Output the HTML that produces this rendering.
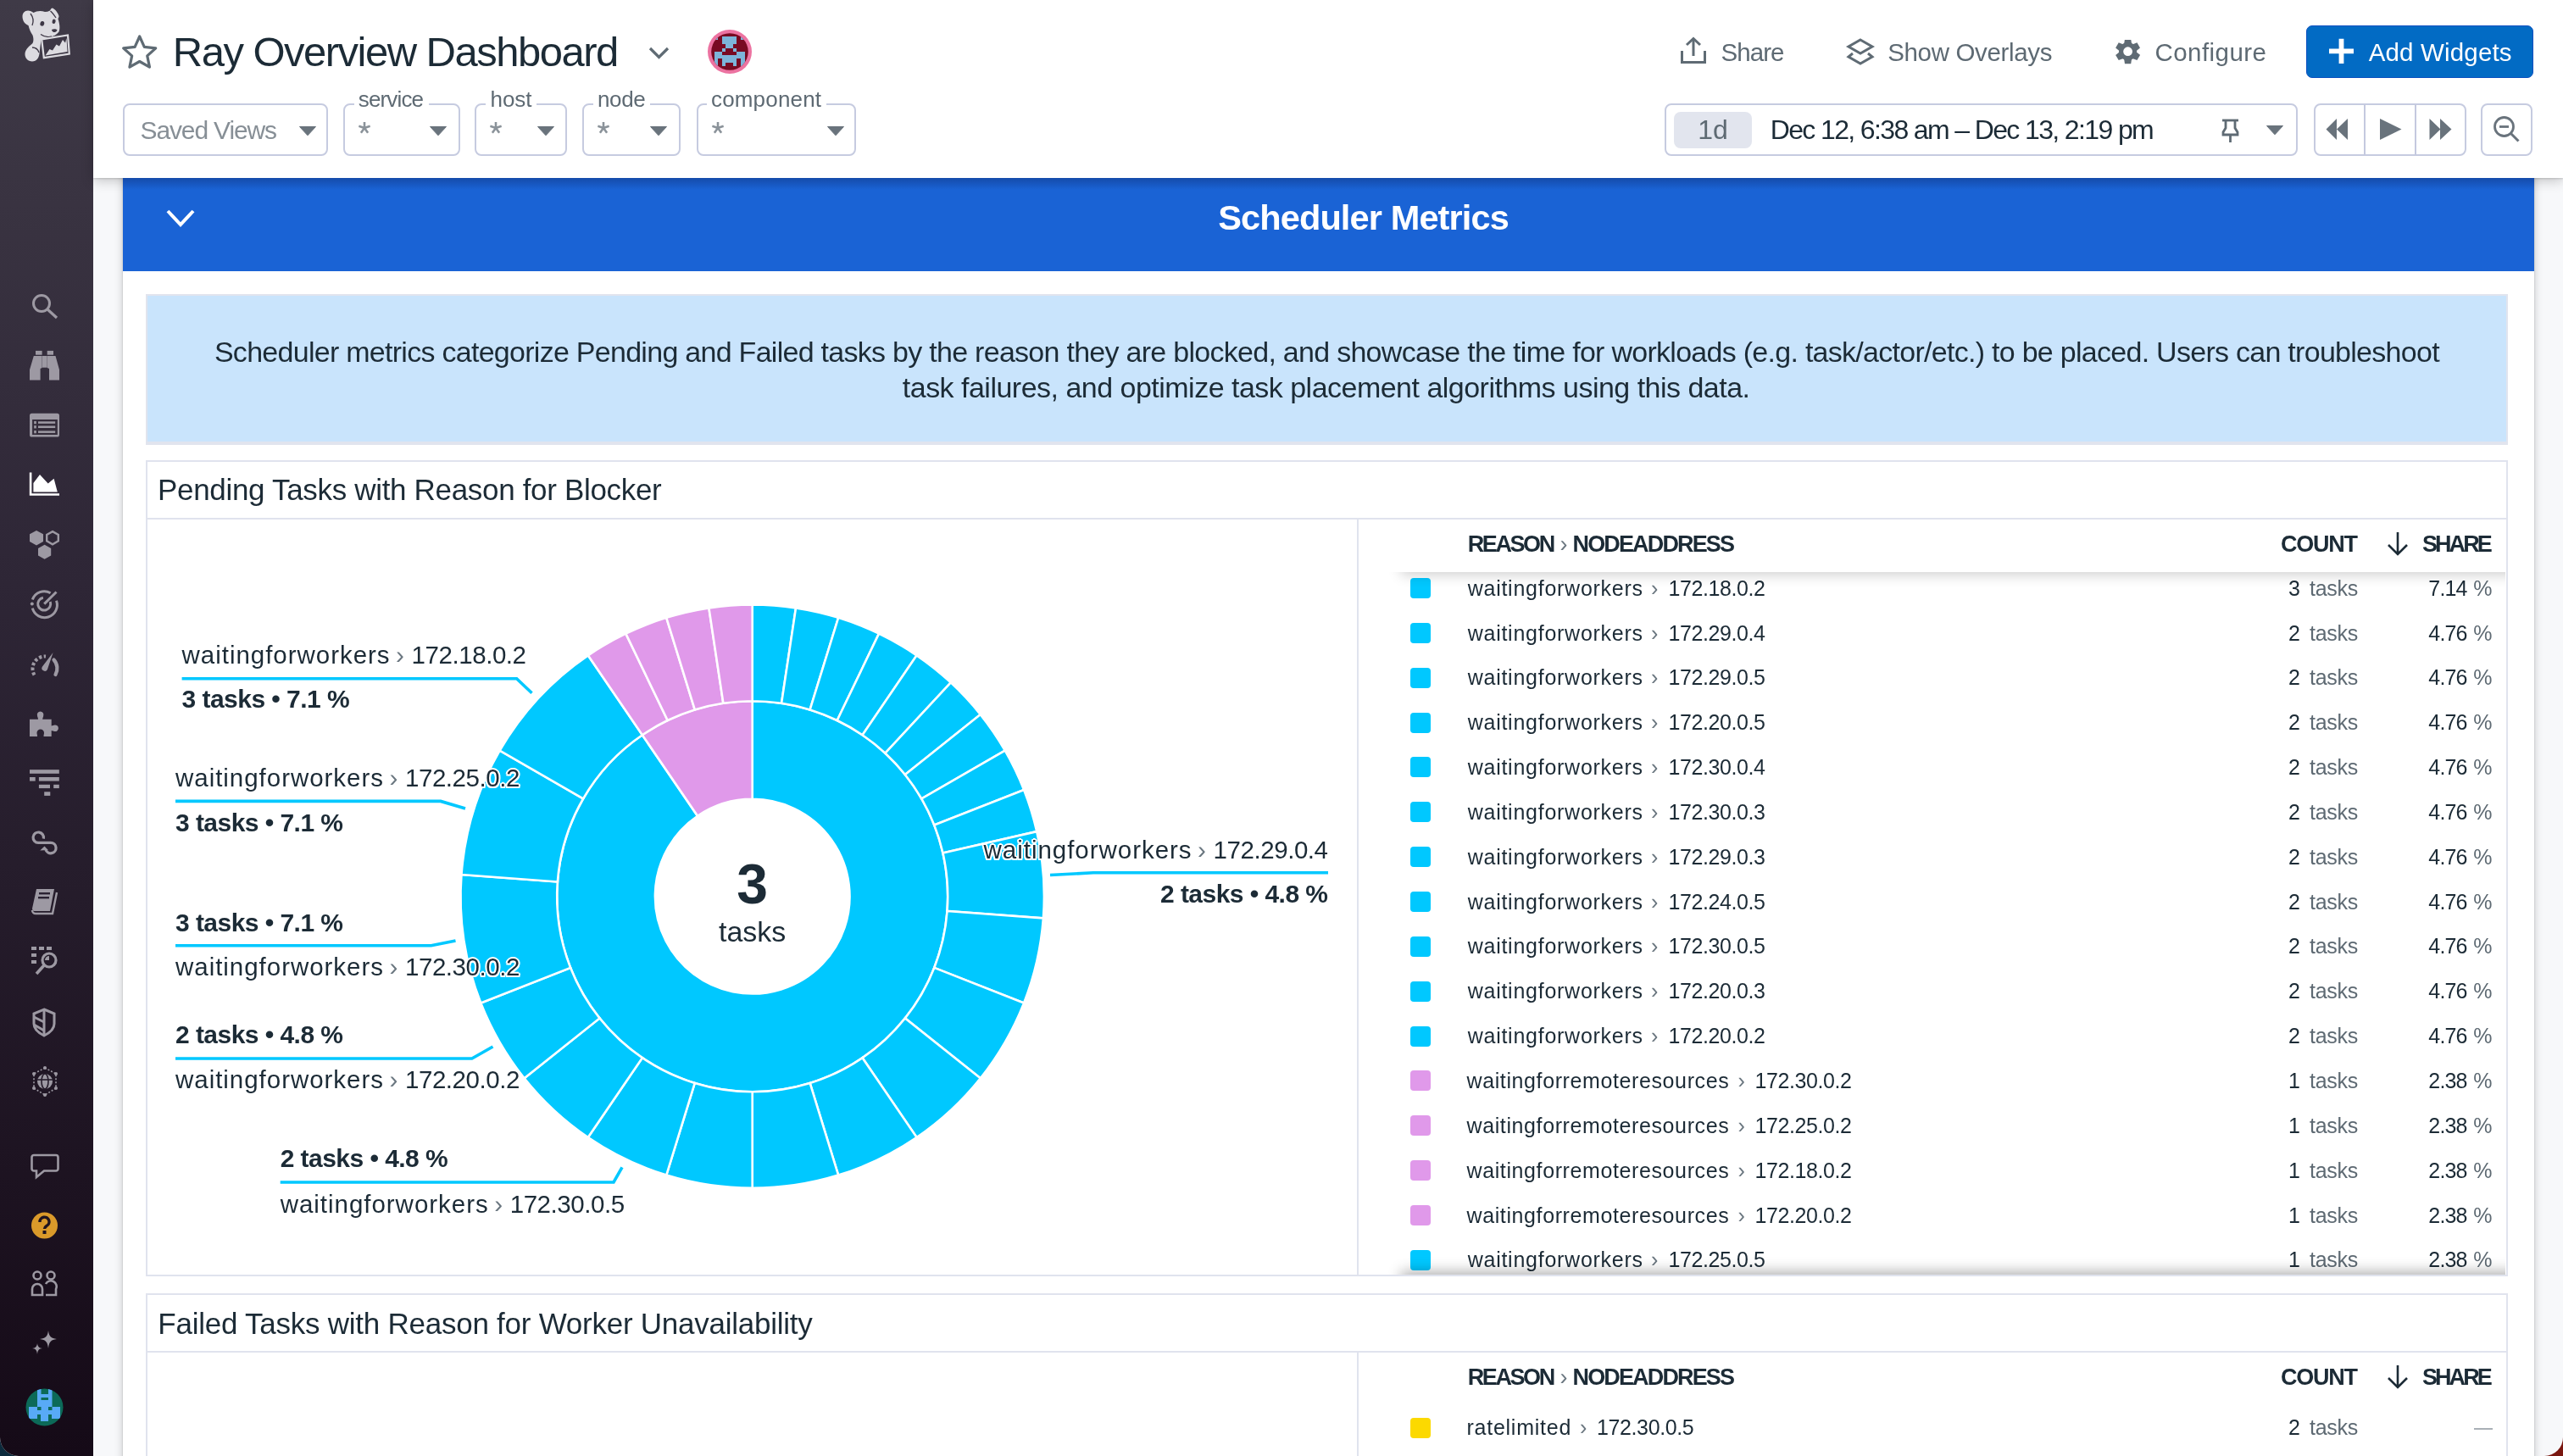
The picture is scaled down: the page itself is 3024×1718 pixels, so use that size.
<!DOCTYPE html><html><head><meta charset="utf-8"><style>
html,body{margin:0;padding:0;width:3024px;height:1718px;overflow:hidden;background:#f7f8fa;font-family:"Liberation Sans",sans-serif;}
.a{position:absolute;}
.t{position:absolute;white-space:nowrap;line-height:1;}
.halo{text-shadow:0 0 1px #fff,2px 0 0 #fff,-2px 0 0 #fff,0 2px 0 #fff,0 -2px 0 #fff,1.5px 1.5px 0 #fff,-1.5px -1.5px 0 #fff,1.5px -1.5px 0 #fff,-1.5px 1.5px 0 #fff;}
.box{position:absolute;box-sizing:border-box;border:2px solid #c6cbe0;border-radius:8px;background:#fff;}
.flab{position:absolute;background:#fff;height:20px;}
</style></head><body>
<div class="a" style="left:0;top:1680px;width:40px;height:38px;background:#0b2a3c"></div>
<div class="a" style="left:2984px;top:1680px;width:40px;height:38px;background:#7a1710"></div>
<div class="a" style="left:0;top:0;width:3024px;height:1718px;border-radius:0 0 22px 22px;overflow:hidden;background:#f7f8fa">
<div class="a" style="left:0;top:0;width:110px;height:1718px;background:linear-gradient(#3f3a47,#2e2636 40%,#150a17)"></div>
<svg class="a" style="left:0px;top:0px" width="110" height="90" viewBox="0 0 110 90">
<g fill="#dcdbe0">
<path d="M33 12.5 C29 12.5 26.5 15.5 26.5 19.5 C26.5 24 29 28.5 33.5 30 C34.5 34 36 38 38.5 41.5 C39.5 44.5 40 48 38.5 51 C35 54 30 58 29.5 63 C29 68.5 33 72.5 38 72.5 C43 72.5 46 68.5 46.5 63 L48.5 47 C51 46.5 55 45.5 58 44 C63 43 67 41 69.5 37.5 C71 34 70.5 28 68.5 22.5 C68.5 21.5 69.5 20.5 69.5 19 C68.5 15 65 11 62 9.5 C60.5 9.5 60 10.5 59 12.5 C57 13.5 55 14 53 14 C48 12 43 13 39.5 15 C37.5 13.5 35.5 12.5 33 12.5 Z"/>
</g>
<g fill="none" stroke="#3d3745" stroke-width="1.3">
<path d="M36 16 C39 20 40 25 38 30"/>
<path d="M59.5 13 C62 15 64 18 66 21"/>
<path d="M48 40.5 C52 43.5 57 44 61 43"/>
<path d="M38 56 C42 56 45 59 46 62"/>
</g>
<g fill="#3d3745">
<ellipse cx="49.8" cy="27.8" rx="2.4" ry="2.9" transform="rotate(15 49.8 27.8)"/>
<ellipse cx="63.6" cy="25.3" rx="2" ry="2.7" transform="rotate(15 63.6 25.3)"/>
<path d="M61 35 C63 34 66.5 34.2 67.5 35.5 C66.5 38 64 38.5 62.8 37.8 C61.8 37 61 36 61 35 Z"/>
</g>
<path d="M49.2 46.3 L80 41.5 L81.8 63.5 L51.8 68.2 Z" fill="#3d3745" stroke="#dcdbe0" stroke-width="2.2"/>
<path d="M53.5 65.5 L58.5 58 L62 59.5 L66.5 52.5 L70 54.5 L74 47 L77 50.5 L78.5 45 L79.5 61 Z" fill="#dcdbe0"/>
</svg>
<svg class="a" style="left:34px;top:344px" width="38" height="36" viewBox="0 0 38 36"><circle cx="15" cy="14" r="9.5" fill="none" stroke="#9d99a3" stroke-width="3"/><path d="M22 21 L33 31" stroke="#9d99a3" stroke-width="3.2"/></svg>
<svg class="a" style="left:34px;top:412px" width="38" height="40" viewBox="0 0 38 40"><g fill="#9d99a3"><rect x="8" y="1.9" width="7.6" height="4.8"/><rect x="21.7" y="1.9" width="7.3" height="4.8"/><rect x="15.8" y="8" width="5.8" height="13.7"/><path d="M5.8 8 H15.6 V22 L13.6 23 V36.6 H1 V24.3 Z"/><path d="M21.7 8 H31.5 L36 24.3 V36.6 H24 V23 L21.7 22 Z"/></g></svg>
<svg class="a" style="left:34px;top:484px" width="38" height="34" viewBox="0 0 38 34"><rect x="1" y="3.8" width="35" height="27.8" rx="2.6" fill="#9d99a3"/><rect x="4.1" y="11" width="29.7" height="18" fill="#342c3a"/><g fill="#9d99a3"><rect x="6.2" y="12.9" width="2.6" height="3.3"/><rect x="6.2" y="18.1" width="2.6" height="3.3"/><rect x="6.2" y="24" width="2.6" height="3.3"/><rect x="11" y="13.3" width="20.2" height="2.5"/><rect x="11" y="18.5" width="20.2" height="2.5"/><rect x="11" y="24.4" width="20.2" height="2.5"/></g></svg>
<svg class="a" style="left:34px;top:554px" width="38" height="34" viewBox="0 0 38 34"><path d="M2.1 3.5 V29.5 H36" fill="none" stroke="#fff" stroke-width="2.6"/><path d="M5.4 26.4 V16 L13 6.1 L22.7 16.6 L29.6 10.7 L33.8 26.4 Z" fill="#fff"/></svg>
<svg class="a" style="left:34px;top:624px" width="38" height="38" viewBox="0 0 38 38"><g fill="#9d99a3"><polygon points="9,1.9 17,6.3 17,15.1 9,19.5 1,15.1 1,6.3"/><polygon points="18.6,18.8 26.2,23 26.2,31.6 18.6,35.8 11,31.6 11,23"/></g><polygon points="28,3.1 34.8,7 34.8,14.4 28,18.3 21.2,14.4 21.2,7" fill="none" stroke="#9d99a3" stroke-width="2.4"/></svg>
<svg class="a" style="left:34px;top:694px" width="38" height="38" viewBox="0 0 38 38"><g fill="none" stroke="#9d99a3" stroke-width="3"><path d="M4.3 13.5 A14.8 14.8 0 0 1 25.6 5.8"/><path d="M32.5 14.8 A14.8 14.8 0 1 1 4.3 23.7"/><path d="M25.25 16 A7.5 7.5 0 1 1 16.9 11.2"/><path d="M18.2 18.6 L32.5 4.5"/></g><circle cx="3.8" cy="18.6" r="2" fill="#9d99a3"/></svg>
<svg class="a" style="left:34px;top:766px" width="38" height="36" viewBox="0 0 38 36"><path d="M6.5 30.5 A14.5 14.5 0 0 1 20 8.6" fill="none" stroke="#9d99a3" stroke-width="4" stroke-dasharray="3.4 2.4"/><path d="M29.5 12.5 A15 15 0 0 1 31.5 30" fill="none" stroke="#9d99a3" stroke-width="4.2" stroke-linecap="round"/><path d="M28.6 4 L21.9 23.9 A3.4 3.4 0 1 1 15.8 20.7 Z" fill="#9d99a3"/></svg>
<svg class="a" style="left:34px;top:836px" width="38" height="36" viewBox="0 0 38 36"><g fill="#9d99a3"><path d="M1 12.8 H11 C11 11 10 10 10 8.5 A3.8 3.8 0 1 1 17.2 8.5 C17.2 10 16.2 11 16.2 12.8 H26.7 V20.5 C28 20.5 29 19.5 30.5 19.5 A3.8 3.8 0 1 1 30.5 27 C29 27 28 26 26.7 26 V32.9 H17.5 C17.5 31 18 30 18 28.8 A4.2 4.2 0 1 0 9.5 28.8 C9.5 30 10 31 10 32.9 H1 Z"/></g></svg>
<svg class="a" style="left:34px;top:906px" width="38" height="36" viewBox="0 0 38 36"><g fill="#9d99a3"><rect x="1" y="2.2" width="34.8" height="4.6"/><rect x="1" y="11" width="6.7" height="4.6"/><rect x="11.9" y="11" width="23.9" height="4.6"/><rect x="11.9" y="19.8" width="13.1" height="4.3"/><rect x="29.2" y="19.8" width="6.6" height="4.3"/><rect x="18.2" y="28.3" width="7.1" height="4.6"/></g></svg>
<svg class="a" style="left:34px;top:976px" width="38" height="38" viewBox="0 0 38 38"><path d="M17.3 13.6 A6.2 6.2 0 1 0 11.1 18.4 H25.9 A6.2 6.2 0 1 1 19.9 26.3" fill="none" stroke="#9d99a3" stroke-width="3.2"/><path d="M13.2 27.5 L18.5 22.5 L22.8 27 Z" fill="#9d99a3"/></svg>
<svg class="a" style="left:34px;top:1046px" width="38" height="36" viewBox="0 0 38 36"><path d="M9 3 H30 L25 29 H6 A3 3 0 0 1 4 26 Z" fill="#9d99a3"/><path d="M33 7 L28 32 H8 A4 4 0 0 1 4 28" fill="none" stroke="#9d99a3" stroke-width="2.4"/><g fill="#2a2232"><rect x="12" y="7" width="13" height="2.4"/><rect x="11" y="12" width="13" height="2.4"/></g></svg>
<svg class="a" style="left:34px;top:1114px" width="38" height="40" viewBox="0 0 38 40"><g fill="#9d99a3"><rect x="3" y="3" width="6" height="4"/><rect x="12" y="3" width="6" height="4"/><rect x="21" y="3" width="6" height="4"/><rect x="3" y="11" width="6" height="4"/><rect x="3" y="19" width="6" height="4"/></g><circle cx="24" cy="19" r="8" fill="none" stroke="#9d99a3" stroke-width="3.2"/><path d="M18 25 L9 35" stroke="#9d99a3" stroke-width="3.6"/><path d="M19 19 A5 5 0 0 1 24 14 V19 Z" fill="#9d99a3"/></svg>
<svg class="a" style="left:34px;top:1188px" width="38" height="36" viewBox="0 0 38 36"><path d="M18 3 L30 8 V20 C30 27 24 31 18 34 C12 31 6 27 6 20 V8 Z" fill="none" stroke="#9d99a3" stroke-width="3"/><path d="M18 3 V34" stroke="#9d99a3" stroke-width="3"/><path d="M6 12 L18 18 M6 21 L18 28" stroke="#9d99a3" stroke-width="3"/></svg>
<svg class="a" style="left:34px;top:1257px" width="38" height="38" viewBox="0 0 38 38"><path d="M19 3 L32 10 L32 27 L19 35 L6 27 L6 10 Z" fill="none" stroke="#9d99a3" stroke-width="1.6" stroke-dasharray="2 2"/><circle cx="19" cy="19" r="9" fill="#9d99a3"/><g fill="none" stroke="#261d2c" stroke-width="1.6"><ellipse cx="19" cy="19" rx="4" ry="9"/><path d="M10 17 H28"/></g><g fill="#9d99a3"><circle cx="19" cy="3" r="2"/><circle cx="32" cy="10" r="2"/><circle cx="32" cy="27" r="2"/><circle cx="19" cy="35" r="2"/><circle cx="6" cy="27" r="2"/><circle cx="6" cy="10" r="2"/></g></svg>
<svg class="a" style="left:34px;top:1358px" width="38" height="36" viewBox="0 0 38 36"><path d="M6 5 H32 A2.5 2.5 0 0 1 34.5 7.5 V21 A2.5 2.5 0 0 1 32 23.5 H18 L9 31 V23.5 H6 A2.5 2.5 0 0 1 3.5 21 V7.5 A2.5 2.5 0 0 1 6 5 Z" fill="none" stroke="#9d99a3" stroke-width="2.6"/></svg>
<svg class="a" style="left:34px;top:1427px" width="38" height="38" viewBox="0 0 38 38"><circle cx="18.5" cy="19" r="15.5" fill="#da9a2a"/><path d="M13 15 A5.5 5.5 0 1 1 21 19.5 C19.5 20.5 18.5 21 18.5 23" fill="none" stroke="#1e1420" stroke-width="3.4"/><rect x="16.5" y="25" width="4" height="4" fill="#1e1420"/></svg>
<svg class="a" style="left:34px;top:1497px" width="38" height="36" viewBox="0 0 38 36"><g fill="none" stroke="#9d99a3" stroke-width="2.6"><circle cx="10" cy="8" r="4.5"/><circle cx="26" cy="8" r="4.5"/><path d="M4 31 V24 A6 6 0 0 1 10 18 A6 6 0 0 1 16 24 V31 Z"/><path d="M20 18 A6 6 0 0 1 32 24 V31 H20"/></g></svg>
<svg class="a" style="left:34px;top:1568px" width="38" height="36" viewBox="0 0 38 36"><g fill="#9d99a3"><path d="M23 2 C24 9 26 11 33 12 C26 13 24 15 23 23 C22 15 20 13 13 12 C20 11 22 9 23 2 Z"/><path d="M10 17 C10.5 21 12 22.5 16 23 C12 23.5 10.5 25 10 30 C9.5 25 8 23.5 4 23 C8 22.5 9.5 21 10 17 Z"/></g></svg>
<svg class="a" style="left:30px;top:1638px" width="46" height="46" viewBox="0 0 46 46"><defs><clipPath id="cav"><circle cx="22.5" cy="22.5" r="22"/></clipPath></defs><circle cx="22.5" cy="22.5" r="22" fill="#0c6a58"/><g clip-path="url(#cav)" fill="#58aaf6"><rect x="14" y="0" width="4.5" height="28"/><rect x="27" y="0" width="4.5" height="28"/><rect x="18" y="7" width="9" height="4"/><rect x="18" y="14" width="9" height="4"/><rect x="4" y="22" width="37" height="9"/><rect x="18" y="18" width="9" height="21"/><rect x="4" y="31" width="10" height="5"/><rect x="31" y="31" width="10" height="5"/></g><g clip-path="url(#cav)" fill="#0c6a58"><rect x="14" y="22" width="4.5" height="4"/><rect x="27" y="22" width="4.5" height="4"/></g></svg>
<div class="a" style="left:145px;top:200px;width:2845px;height:1600px;background:#fff;box-shadow:0 0 2px rgba(0,0,0,.18),0 0 10px rgba(0,0,0,.2)"></div>
<div class="a" style="left:110px;top:0;width:2914px;height:210px;background:#fff;box-shadow:0 1px 2px rgba(0,0,0,.15),0 3px 14px rgba(0,0,0,.22)"></div>
<svg class="a" style="left:140px;top:36px" width="50" height="50" viewBox="0 0 50 50"><polygon points="24.70,7.00 30.28,19.31 43.72,20.82 33.74,29.94 36.46,43.18 24.70,36.50 12.94,43.18 15.66,29.94 5.68,20.82 19.12,19.31" fill="none" stroke="#5f6b74" stroke-width="3.2" stroke-linejoin="round"/></svg>
<svg class="a" style="left:760px;top:50px" width="36" height="26" viewBox="0 0 36 26"><polyline points="7,7 17.5,17.5 28,7" fill="none" stroke="#5f6b74" stroke-width="3.2"/></svg>
<svg class="a" style="left:835px;top:35px" width="52" height="52" viewBox="0 0 52 52"><defs><clipPath id="cav2"><circle cx="26" cy="26" r="21.8"/></clipPath></defs><circle cx="26" cy="26" r="26" fill="#ec73a1"/><circle cx="26" cy="26" r="21.8" fill="#780a22"/><g clip-path="url(#cav2)" fill="#7db4d9" shape-rendering="crispEdges"><rect x="17.05" y="7.8" width="17.15" height="9.3"/><rect x="21.4" y="17" width="8.8" height="4.6"/><rect x="17.05" y="21.5" width="4.35" height="4.4"/><rect x="30.2" y="21.5" width="4" height="4.4"/><rect x="7.7" y="25.9" width="9.35" height="3.8"/><rect x="34.2" y="25.9" width="9.4" height="3.8"/><rect x="7.7" y="29.6" width="35.9" height="4.8"/><rect x="7.7" y="34.3" width="4.35" height="8.8"/><rect x="17.05" y="34.3" width="4.35" height="8.8"/><rect x="30.2" y="34.3" width="4" height="8.8"/><rect x="38.9" y="34.3" width="4.7" height="8.8"/><rect x="21.4" y="34.3" width="8.8" height="5"/><rect x="6" y="8" width="6" height="4"/><rect x="39" y="8" width="6" height="4"/></g></svg>
<div class="box" style="left:145.0px;top:122px;width:242.0px;height:62px"></div>
<div class="box" style="left:405.0px;top:122px;width:138.0px;height:62px"></div><div class="a" style="left:418.0px;top:118px;width:88.0px;height:10px;background:#fff"></div>
<div class="box" style="left:560.0px;top:122px;width:109.0px;height:62px"></div><div class="a" style="left:573.0px;top:118px;width:60.0px;height:10px;background:#fff"></div>
<div class="box" style="left:687.0px;top:122px;width:116.0px;height:62px"></div><div class="a" style="left:700.0px;top:118px;width:67.0px;height:10px;background:#fff"></div>
<div class="box" style="left:822.0px;top:122px;width:188.0px;height:62px"></div><div class="a" style="left:834.0px;top:118px;width:141.0px;height:10px;background:#fff"></div>
<svg class="a" style="left:352.8px;top:149px" width="20" height="11" viewBox="0 0 20 11"><path d="M0.5 0.5 H19.5 L10 10.8 Z" fill="#69737c" stroke="#69737c" stroke-width="1" stroke-linejoin="round"/></svg>
<svg class="a" style="left:506.7px;top:149px" width="20" height="11" viewBox="0 0 20 11"><path d="M0.5 0.5 H19.5 L10 10.8 Z" fill="#69737c" stroke="#69737c" stroke-width="1" stroke-linejoin="round"/></svg>
<svg class="a" style="left:634px;top:149px" width="20" height="11" viewBox="0 0 20 11"><path d="M0.5 0.5 H19.5 L10 10.8 Z" fill="#69737c" stroke="#69737c" stroke-width="1" stroke-linejoin="round"/></svg>
<svg class="a" style="left:767px;top:149px" width="20" height="11" viewBox="0 0 20 11"><path d="M0.5 0.5 H19.5 L10 10.8 Z" fill="#69737c" stroke="#69737c" stroke-width="1" stroke-linejoin="round"/></svg>
<svg class="a" style="left:975.5px;top:149px" width="20" height="11" viewBox="0 0 20 11"><path d="M0.5 0.5 H19.5 L10 10.8 Z" fill="#69737c" stroke="#69737c" stroke-width="1" stroke-linejoin="round"/></svg>
<svg class="a" style="left:422.7px;top:143.5px" width="15" height="14" viewBox="0 0 15 14"><path d="M7 7 L7.00 0.00 M7 7 L13.66 4.84 M7 7 L11.11 12.66 M7 7 L2.89 12.66 M7 7 L0.34 4.84" stroke="#8b939a" stroke-width="2.6"/></svg>
<svg class="a" style="left:578px;top:143.5px" width="15" height="14" viewBox="0 0 15 14"><path d="M7 7 L7.00 0.00 M7 7 L13.66 4.84 M7 7 L11.11 12.66 M7 7 L2.89 12.66 M7 7 L0.34 4.84" stroke="#8b939a" stroke-width="2.6"/></svg>
<svg class="a" style="left:704.5px;top:143.5px" width="15" height="14" viewBox="0 0 15 14"><path d="M7 7 L7.00 0.00 M7 7 L13.66 4.84 M7 7 L11.11 12.66 M7 7 L2.89 12.66 M7 7 L0.34 4.84" stroke="#8b939a" stroke-width="2.6"/></svg>
<svg class="a" style="left:839.5px;top:143.5px" width="15" height="14" viewBox="0 0 15 14"><path d="M7 7 L7.00 0.00 M7 7 L13.66 4.84 M7 7 L11.11 12.66 M7 7 L2.89 12.66 M7 7 L0.34 4.84" stroke="#8b939a" stroke-width="2.6"/></svg>
<svg class="a" style="left:1980px;top:42px" width="36" height="36" viewBox="0 0 36 36"><g fill="none" stroke="#5f6b74" stroke-width="3"><path d="M4.5 18 V31.5 H31.5 V18"/><path d="M18 4 V24"/><path d="M10 11 L18 3.5 L26 11"/></g></svg>
<svg class="a" style="left:2176px;top:42px" width="38" height="36" viewBox="0 0 38 36"><g fill="none" stroke="#5f6b74" stroke-width="3" stroke-linejoin="miter"><path d="M19 5 L33 13 L19 21 L5 13 Z"/><path d="M10 21 L5 25 L19 33 L33 25 L28 21"/></g></svg>
<svg class="a" style="left:2495px;top:47px" width="30" height="30" viewBox="0 0 30 30"><path d="M12.00 -0.90 L19.20 -0.90 L20.20 5.70 L11.00 5.70 Z" fill="#5f6b74" transform="rotate(0 15.60 13.70)"/><path d="M12.00 -0.90 L19.20 -0.90 L20.20 5.70 L11.00 5.70 Z" fill="#5f6b74" transform="rotate(60 15.60 13.70)"/><path d="M12.00 -0.90 L19.20 -0.90 L20.20 5.70 L11.00 5.70 Z" fill="#5f6b74" transform="rotate(120 15.60 13.70)"/><path d="M12.00 -0.90 L19.20 -0.90 L20.20 5.70 L11.00 5.70 Z" fill="#5f6b74" transform="rotate(180 15.60 13.70)"/><path d="M12.00 -0.90 L19.20 -0.90 L20.20 5.70 L11.00 5.70 Z" fill="#5f6b74" transform="rotate(240 15.60 13.70)"/><path d="M12.00 -0.90 L19.20 -0.90 L20.20 5.70 L11.00 5.70 Z" fill="#5f6b74" transform="rotate(300 15.60 13.70)"/><circle cx="15.6" cy="13.7" r="10.6" fill="#5f6b74"/><circle cx="15.6" cy="13.7" r="5.4" fill="#fff"/></svg>
<div class="a" style="left:2721px;top:30px;width:268px;height:62px;box-sizing:border-box;background:#026bc4;border:1.5px solid #0a4fc0;border-radius:7px"></div>
<svg class="a" style="left:2745px;top:44px" width="34" height="34" viewBox="0 0 34 34"><path d="M17.5 1.8 V31 M3 16.4 H32" stroke="#fff" stroke-width="5.8"/></svg>
<div class="box" style="left:1964px;top:122px;width:747px;height:62px"></div>
<div class="a" style="left:1975px;top:131.5px;width:92px;height:43px;border-radius:8px;background:#e2e5ee"></div>
<svg class="a" style="left:2618px;top:138px" width="28" height="32" viewBox="0 0 28 32"><g fill="none" stroke="#5f6b74" stroke-width="2.8"><path d="M4 4 H23"/><path d="M8 4 V13 L5 18 V21 H22 V18 L19 13 V4"/><path d="M13.5 21 V30"/></g></svg>
<svg class="a" style="left:2673.5px;top:148px" width="20" height="11" viewBox="0 0 20 11"><path d="M0.5 0.5 H19.5 L10 10.8 Z" fill="#69737c" stroke="#69737c" stroke-width="1" stroke-linejoin="round"/></svg>
<div class="box" style="left:2729.5px;top:122px;width:180px;height:62px"></div>
<div class="a" style="left:2789px;top:123px;width:2px;height:60px;background:#c4c9df"></div>
<div class="a" style="left:2848.5px;top:123px;width:2px;height:60px;background:#c4c9df"></div>
<svg class="a" style="left:2744px;top:139px" width="28" height="28" viewBox="0 0 28 28"><path d="M0.5 13.5 L13 1 V26 Z M13 13.5 L26 1 V26 Z" fill="#69737c"/></svg>
<svg class="a" style="left:2807px;top:139px" width="28" height="28" viewBox="0 0 28 28"><path d="M1 1 L26.5 13.5 L1 26 Z" fill="#69737c"/></svg>
<svg class="a" style="left:2866px;top:139px" width="28" height="28" viewBox="0 0 28 28"><path d="M0.5 1 L13.5 13.5 L0.5 26 Z M13 1 L26.5 13.5 L13 26 Z" fill="#69737c"/></svg>
<div class="box" style="left:2927px;top:122px;width:61px;height:62px"></div>
<svg class="a" style="left:2940px;top:135px" width="36" height="36" viewBox="0 0 36 36"><circle cx="14.5" cy="14.5" r="11" fill="none" stroke="#69737c" stroke-width="2.8"/><path d="M9 14.5 H20" stroke="#69737c" stroke-width="2.8"/><path d="M22.5 22.5 L31.5 31.5" stroke="#69737c" stroke-width="3"/></svg>
<div class="a" style="left:145px;top:210px;width:2845px;height:110px;background:#1a63d5"></div>
<div class="a" style="left:145px;top:210px;width:2845px;height:14px;background:linear-gradient(rgba(10,30,90,.35),rgba(10,30,90,0))"></div>
<svg class="a" style="left:190px;top:240px" width="48" height="36"><polyline points="8,9 23,25 38,9" fill="none" stroke="#fff" stroke-width="4"/></svg>
<div class="a" style="left:172px;top:347px;width:2787px;height:178px;box-sizing:border-box;background:#c9e4fc;border:2px solid #e1e4ee;border-bottom-width:4px"></div>
<div class="a" style="left:172px;top:543px;width:2787px;height:963px;box-sizing:border-box;border:2px solid #e0e3ee;background:#fff"></div>
<div class="a" style="left:172px;top:611px;width:2786px;height:2px;background:#e0e3ee"></div>
<div class="a" style="left:1601px;top:612px;width:2px;height:893px;background:#e0e3ee"></div>
<div class="a" style="left:172px;top:1526px;width:2787px;height:260px;box-sizing:border-box;border:2px solid #e0e3ee;background:#fff"></div>
<div class="a" style="left:172px;top:1594px;width:2786px;height:2px;background:#e0e3ee"></div>
<div class="a" style="left:1601px;top:1595px;width:2px;height:200px;background:#e0e3ee"></div>
<div class="a" style="left:1664px;top:682.0px;width:24px;height:24px;border-radius:4px;background:#00c8ff"></div>
<div class="a" style="left:1664px;top:734.9px;width:24px;height:24px;border-radius:4px;background:#00c8ff"></div>
<div class="a" style="left:1664px;top:787.7px;width:24px;height:24px;border-radius:4px;background:#00c8ff"></div>
<div class="a" style="left:1664px;top:840.5px;width:24px;height:24px;border-radius:4px;background:#00c8ff"></div>
<div class="a" style="left:1664px;top:893.4px;width:24px;height:24px;border-radius:4px;background:#00c8ff"></div>
<div class="a" style="left:1664px;top:946.2px;width:24px;height:24px;border-radius:4px;background:#00c8ff"></div>
<div class="a" style="left:1664px;top:999.1px;width:24px;height:24px;border-radius:4px;background:#00c8ff"></div>
<div class="a" style="left:1664px;top:1052.0px;width:24px;height:24px;border-radius:4px;background:#00c8ff"></div>
<div class="a" style="left:1664px;top:1104.8px;width:24px;height:24px;border-radius:4px;background:#00c8ff"></div>
<div class="a" style="left:1664px;top:1157.7px;width:24px;height:24px;border-radius:4px;background:#00c8ff"></div>
<div class="a" style="left:1664px;top:1210.5px;width:24px;height:24px;border-radius:4px;background:#00c8ff"></div>
<div class="a" style="left:1664px;top:1263.3px;width:24px;height:24px;border-radius:4px;background:#e099ea"></div>
<div class="a" style="left:1664px;top:1316.2px;width:24px;height:24px;border-radius:4px;background:#e099ea"></div>
<div class="a" style="left:1664px;top:1369.1px;width:24px;height:24px;border-radius:4px;background:#e099ea"></div>
<div class="a" style="left:1664px;top:1421.9px;width:24px;height:24px;border-radius:4px;background:#e099ea"></div>
<div class="a" style="left:1664px;top:1474.8px;width:24px;height:24px;border-radius:4px;background:#00c8ff"></div>
<div class="a" style="left:1664px;top:1672.5px;width:24px;height:24px;border-radius:4px;background:#fcd900"></div>
<svg class="a" style="left:2815px;top:626.8px" width="28" height="30"><path d="M14 1 V27 M3 16 L14 27 L25 16" fill="none" stroke="#1c2b36" stroke-width="2.6"/></svg>
<svg class="a" style="left:2815px;top:1609.9px" width="28" height="30"><path d="M14 1 V27 M3 16 L14 27 L25 16" fill="none" stroke="#1c2b36" stroke-width="2.6"/></svg>
<div class="a" style="left:2919px;top:1685px;width:22px;height:2px;background:#a9b0b6"></div>
<svg class="a" style="left:0;top:0" width="3024" height="1718"><g stroke="#fff" stroke-width="2.6" stroke-linejoin="miter"><path d="M887.70 827.20 A230.50 230.50 0 1 1 757.85 867.25 L823.03 962.85 A114.80 114.80 0 1 0 887.70 942.90 Z" fill="#00c8ff"/><path d="M757.85 867.25 A230.50 230.50 0 0 1 887.70 827.20 L887.70 942.90 A114.80 114.80 0 0 0 823.03 962.85 Z" fill="#e099ea"/><path d="M887.70 713.50 A344.20 344.20 0 0 1 939.00 717.34 L922.05 829.77 A230.50 230.50 0 0 0 887.70 827.20 Z" fill="#00c8ff"/><path d="M939.00 717.34 A344.20 344.20 0 0 1 989.15 728.79 L955.64 837.44 A230.50 230.50 0 0 0 922.05 829.77 Z" fill="#00c8ff"/><path d="M989.15 728.79 A344.20 344.20 0 0 1 1037.04 747.59 L987.71 850.03 A230.50 230.50 0 0 0 955.64 837.44 Z" fill="#00c8ff"/><path d="M1037.04 747.59 A344.20 344.20 0 0 1 1081.59 773.31 L1017.55 867.25 A230.50 230.50 0 0 0 987.71 850.03 Z" fill="#00c8ff"/><path d="M1081.59 773.31 A344.20 344.20 0 0 1 1121.82 805.38 L1044.48 888.73 A230.50 230.50 0 0 0 1017.55 867.25 Z" fill="#00c8ff"/><path d="M1121.82 805.38 A344.20 344.20 0 0 1 1156.81 843.09 L1067.91 913.99 A230.50 230.50 0 0 0 1044.48 888.73 Z" fill="#00c8ff"/><path d="M1156.81 843.09 A344.20 344.20 0 0 1 1185.79 885.60 L1087.32 942.45 A230.50 230.50 0 0 0 1067.91 913.99 Z" fill="#00c8ff"/><path d="M1185.79 885.60 A344.20 344.20 0 0 1 1208.11 931.95 L1102.27 973.49 A230.50 230.50 0 0 0 1087.32 942.45 Z" fill="#00c8ff"/><path d="M1208.11 931.95 A344.20 344.20 0 0 1 1223.27 981.11 L1112.42 1006.41 A230.50 230.50 0 0 0 1102.27 973.49 Z" fill="#00c8ff"/><path d="M1223.27 981.11 A344.20 344.20 0 0 1 1230.94 1083.42 L1117.56 1074.93 A230.50 230.50 0 0 0 1112.42 1006.41 Z" fill="#00c8ff"/><path d="M1230.94 1083.42 A344.20 344.20 0 0 1 1208.11 1183.45 L1102.27 1141.91 A230.50 230.50 0 0 0 1117.56 1074.93 Z" fill="#00c8ff"/><path d="M1208.11 1183.45 A344.20 344.20 0 0 1 1156.81 1272.31 L1067.91 1201.41 A230.50 230.50 0 0 0 1102.27 1141.91 Z" fill="#00c8ff"/><path d="M1156.81 1272.31 A344.20 344.20 0 0 1 1081.59 1342.09 L1017.55 1248.15 A230.50 230.50 0 0 0 1067.91 1201.41 Z" fill="#00c8ff"/><path d="M1081.59 1342.09 A344.20 344.20 0 0 1 989.15 1386.61 L955.64 1277.96 A230.50 230.50 0 0 0 1017.55 1248.15 Z" fill="#00c8ff"/><path d="M989.15 1386.61 A344.20 344.20 0 0 1 887.70 1401.90 L887.70 1288.20 A230.50 230.50 0 0 0 955.64 1277.96 Z" fill="#00c8ff"/><path d="M887.70 1401.90 A344.20 344.20 0 0 1 786.25 1386.61 L819.76 1277.96 A230.50 230.50 0 0 0 887.70 1288.20 Z" fill="#00c8ff"/><path d="M786.25 1386.61 A344.20 344.20 0 0 1 693.81 1342.09 L757.85 1248.15 A230.50 230.50 0 0 0 819.76 1277.96 Z" fill="#00c8ff"/><path d="M693.81 1342.09 A344.20 344.20 0 0 1 618.59 1272.31 L707.49 1201.41 A230.50 230.50 0 0 0 757.85 1248.15 Z" fill="#00c8ff"/><path d="M618.59 1272.31 A344.20 344.20 0 0 1 567.29 1183.45 L673.13 1141.91 A230.50 230.50 0 0 0 707.49 1201.41 Z" fill="#00c8ff"/><path d="M567.29 1183.45 A344.20 344.20 0 0 1 544.46 1031.98 L657.84 1040.47 A230.50 230.50 0 0 0 673.13 1141.91 Z" fill="#00c8ff"/><path d="M544.46 1031.98 A344.20 344.20 0 0 1 589.61 885.60 L688.08 942.45 A230.50 230.50 0 0 0 657.84 1040.47 Z" fill="#00c8ff"/><path d="M589.61 885.60 A344.20 344.20 0 0 1 693.81 773.31 L757.85 867.25 A230.50 230.50 0 0 0 688.08 942.45 Z" fill="#00c8ff"/><path d="M693.81 773.31 A344.20 344.20 0 0 1 738.36 747.59 L787.69 850.03 A230.50 230.50 0 0 0 757.85 867.25 Z" fill="#e099ea"/><path d="M738.36 747.59 A344.20 344.20 0 0 1 786.25 728.79 L819.76 837.44 A230.50 230.50 0 0 0 787.69 850.03 Z" fill="#e099ea"/><path d="M786.25 728.79 A344.20 344.20 0 0 1 836.40 717.34 L853.35 829.77 A230.50 230.50 0 0 0 819.76 837.44 Z" fill="#e099ea"/><path d="M836.40 717.34 A344.20 344.20 0 0 1 887.70 713.50 L887.70 827.20 A230.50 230.50 0 0 0 853.35 829.77 Z" fill="#e099ea"/></g><polyline points="214.6,800.7 609.6,800.7 627.5,817.7" fill="none" stroke="#00c8ff" stroke-width="3.6"/><polyline points="207.0,945.4 520.0,945.4 549.0,954.0" fill="none" stroke="#00c8ff" stroke-width="3.6"/><polyline points="207.0,1115.8 508.7,1115.8 537.5,1110.0" fill="none" stroke="#00c8ff" stroke-width="3.6"/><polyline points="207.0,1249.0 556.8,1249.0 581.5,1235.0" fill="none" stroke="#00c8ff" stroke-width="3.6"/><polyline points="330.7,1395.0 724.0,1395.0 734.0,1377.3" fill="none" stroke="#00c8ff" stroke-width="3.6"/><polyline points="1567.0,1029.8 1290.0,1029.8 1239.0,1032.5" fill="none" stroke="#00c8ff" stroke-width="3.6"/></svg>
<div class="a" style="left:0;top:0;width:3024px;height:1718px;will-change:transform">
<div id="title" class="t" style="left:203.80px;top:36.95px;font-size:49.00px;font-weight:400;color:#1c2b36;letter-spacing:-1.519px;">Ray Overview Dashboard</div>
<div id="savedviews" class="t" style="left:165.60px;top:138.50px;font-size:30.00px;font-weight:400;color:#878f96;letter-spacing:-1.149px;">Saved Views</div>
<div id="lsvc" class="t" style="left:422.80px;top:104.40px;font-size:26.00px;font-weight:400;color:#5e6a73;letter-spacing:-0.860px;">service</div>
<div id="lhost" class="t" style="left:578.50px;top:104.40px;font-size:26.00px;font-weight:400;color:#5e6a73;letter-spacing:-0.052px;">host</div>
<div id="lnode" class="t" style="left:705.00px;top:104.40px;font-size:26.00px;font-weight:400;color:#5e6a73;letter-spacing:-0.348px;">node</div>
<div id="lcomp" class="t" style="left:839.00px;top:104.40px;font-size:26.00px;font-weight:400;color:#5e6a73;letter-spacing:0.168px;">component</div>
<div id="share" class="t" style="left:2030.60px;top:46.52px;font-size:29.50px;font-weight:400;color:#5e6a73;letter-spacing:-0.984px;">Share</div>
<div id="overlays" class="t" style="left:2227.20px;top:46.52px;font-size:29.50px;font-weight:400;color:#5e6a73;letter-spacing:-0.349px;">Show Overlays</div>
<div id="configure" class="t" style="left:2542.50px;top:46.52px;font-size:29.50px;font-weight:400;color:#5e6a73;letter-spacing:0.447px;">Configure</div>
<div id="addw" class="t" style="left:2794.70px;top:46.52px;font-size:29.50px;font-weight:400;color:#ffffff;letter-spacing:0.165px;">Add Widgets</div>
<div id="oned" class="t" style="left:2003.20px;top:137.20px;font-size:32.00px;font-weight:400;color:#5e6a73;letter-spacing:0.000px;">1d</div>
<div id="date" class="t" style="left:2088.70px;top:137.20px;font-size:32.00px;font-weight:400;color:#1c2b36;letter-spacing:-1.630px;">Dec 12, 6:38 am &ndash; Dec 13, 2:19 pm</div>
<div id="sched" class="t" style="left:1437.20px;top:236.33px;font-size:41.50px;font-weight:700;color:#ffffff;letter-spacing:-0.869px;">Scheduler Metrics</div>
<div id="desc1" class="t" style="left:252.90px;top:397.50px;font-size:34.00px;font-weight:400;color:#1c2b36;letter-spacing:-0.721px;">Scheduler metrics categorize Pending and Failed tasks by the reason they are blocked, and showcase the time for workloads (e.g. task/actor/etc.) to be placed. Users can troubleshoot</div>
<div id="desc2" class="t" style="left:1064.80px;top:439.80px;font-size:34.00px;font-weight:400;color:#1c2b36;letter-spacing:-0.513px;">task failures, and optimize task placement algorithms using this data.</div>
<div id="w1title" class="t" style="left:186.00px;top:560.25px;font-size:35.00px;font-weight:400;color:#1c2b36;letter-spacing:-0.321px;">Pending Tasks with Reason for Blocker</div>
<div id="w2title" class="t" style="left:186.30px;top:1543.55px;font-size:35.00px;font-weight:400;color:#1c2b36;letter-spacing:-0.246px;">Failed Tasks with Reason for Worker Unavailability</div>
<div id="h1rnw" class="t" style="left:1731.70px;top:628.75px;font-size:27.00px;font-weight:700;color:#1c2b36;letter-spacing:-2.403px;">REASON</div>
<div id="h1rns" class="t" style="left:1840.50px;top:628.75px;font-size:27.00px;font-weight:400;color:#6b7780;letter-spacing:0.000px;">&rsaquo;</div>
<div id="h1rni" class="t" style="left:1855.50px;top:628.75px;font-size:27.00px;font-weight:700;color:#1c2b36;letter-spacing:-1.853px;">NODEADDRESS</div>
<div id="h1cnt" class="t" style="left:2691.00px;top:628.75px;font-size:27.00px;font-weight:700;color:#1c2b36;letter-spacing:-1.250px;">COUNT</div>
<div id="h1shr" class="t" style="left:2858.00px;top:628.75px;font-size:27.00px;font-weight:700;color:#1c2b36;letter-spacing:-2.954px;">SHARE</div>
<div id="h2rnw" class="t" style="left:1731.70px;top:1611.85px;font-size:27.00px;font-weight:700;color:#1c2b36;letter-spacing:-2.403px;">REASON</div>
<div id="h2rns" class="t" style="left:1840.50px;top:1611.85px;font-size:27.00px;font-weight:400;color:#6b7780;letter-spacing:0.000px;">&rsaquo;</div>
<div id="h2rni" class="t" style="left:1855.50px;top:1611.85px;font-size:27.00px;font-weight:700;color:#1c2b36;letter-spacing:-1.853px;">NODEADDRESS</div>
<div id="h2cnt" class="t" style="left:2691.00px;top:1611.85px;font-size:27.00px;font-weight:700;color:#1c2b36;letter-spacing:-1.250px;">COUNT</div>
<div id="h2shr" class="t" style="left:2858.00px;top:1611.85px;font-size:27.00px;font-weight:700;color:#1c2b36;letter-spacing:-2.954px;">SHARE</div>
<div id="r0w" class="t" style="left:1731.70px;top:681.65px;font-size:25.00px;font-weight:400;color:#1c2b36;letter-spacing:0.743px;">waitingforworkers</div>
<div id="r0s" class="t" style="left:1948.00px;top:681.65px;font-size:25.00px;font-weight:400;color:#6b7780;letter-spacing:0.000px;">&rsaquo;</div>
<div id="r0i" class="t" style="left:1968.60px;top:681.65px;font-size:25.00px;font-weight:400;color:#1c2b36;letter-spacing:-0.430px;">172.18.0.2</div>
<div id="c0" class="t" style="left:2700.09px;top:681.65px;font-size:25.00px;font-weight:400;color:#1c2b36;letter-spacing:0.000px;">3</div>
<div id="ct0" class="t" style="left:2725.00px;top:681.65px;font-size:25.00px;font-weight:400;color:#5e6a73;letter-spacing:-0.265px;">tasks</div>
<div id="s0" class="t" style="left:2865.30px;top:681.65px;font-size:25.00px;font-weight:400;color:#1c2b36;letter-spacing:-0.824px;">7.14</div>
<div id="sp0" class="t" style="left:2918.27px;top:681.65px;font-size:25.00px;font-weight:400;color:#5e6a73;letter-spacing:0.000px;">%</div>
<div id="r1w" class="t" style="left:1731.70px;top:734.50px;font-size:25.00px;font-weight:400;color:#1c2b36;letter-spacing:0.743px;">waitingforworkers</div>
<div id="r1s" class="t" style="left:1948.00px;top:734.50px;font-size:25.00px;font-weight:400;color:#6b7780;letter-spacing:0.000px;">&rsaquo;</div>
<div id="r1i" class="t" style="left:1968.60px;top:734.50px;font-size:25.00px;font-weight:400;color:#1c2b36;letter-spacing:-0.430px;">172.29.0.4</div>
<div id="c1" class="t" style="left:2700.09px;top:734.50px;font-size:25.00px;font-weight:400;color:#1c2b36;letter-spacing:0.000px;">2</div>
<div id="ct1" class="t" style="left:2725.00px;top:734.50px;font-size:25.00px;font-weight:400;color:#5e6a73;letter-spacing:-0.265px;">tasks</div>
<div id="s1" class="t" style="left:2865.30px;top:734.50px;font-size:25.00px;font-weight:400;color:#1c2b36;letter-spacing:-0.824px;">4.76</div>
<div id="sp1" class="t" style="left:2918.27px;top:734.50px;font-size:25.00px;font-weight:400;color:#5e6a73;letter-spacing:0.000px;">%</div>
<div id="r2w" class="t" style="left:1731.70px;top:787.35px;font-size:25.00px;font-weight:400;color:#1c2b36;letter-spacing:0.743px;">waitingforworkers</div>
<div id="r2s" class="t" style="left:1948.00px;top:787.35px;font-size:25.00px;font-weight:400;color:#6b7780;letter-spacing:0.000px;">&rsaquo;</div>
<div id="r2i" class="t" style="left:1968.60px;top:787.35px;font-size:25.00px;font-weight:400;color:#1c2b36;letter-spacing:-0.430px;">172.29.0.5</div>
<div id="c2" class="t" style="left:2700.09px;top:787.35px;font-size:25.00px;font-weight:400;color:#1c2b36;letter-spacing:0.000px;">2</div>
<div id="ct2" class="t" style="left:2725.00px;top:787.35px;font-size:25.00px;font-weight:400;color:#5e6a73;letter-spacing:-0.265px;">tasks</div>
<div id="s2" class="t" style="left:2865.30px;top:787.35px;font-size:25.00px;font-weight:400;color:#1c2b36;letter-spacing:-0.824px;">4.76</div>
<div id="sp2" class="t" style="left:2918.27px;top:787.35px;font-size:25.00px;font-weight:400;color:#5e6a73;letter-spacing:0.000px;">%</div>
<div id="r3w" class="t" style="left:1731.70px;top:840.20px;font-size:25.00px;font-weight:400;color:#1c2b36;letter-spacing:0.743px;">waitingforworkers</div>
<div id="r3s" class="t" style="left:1948.00px;top:840.20px;font-size:25.00px;font-weight:400;color:#6b7780;letter-spacing:0.000px;">&rsaquo;</div>
<div id="r3i" class="t" style="left:1968.60px;top:840.20px;font-size:25.00px;font-weight:400;color:#1c2b36;letter-spacing:-0.430px;">172.20.0.5</div>
<div id="c3" class="t" style="left:2700.09px;top:840.20px;font-size:25.00px;font-weight:400;color:#1c2b36;letter-spacing:0.000px;">2</div>
<div id="ct3" class="t" style="left:2725.00px;top:840.20px;font-size:25.00px;font-weight:400;color:#5e6a73;letter-spacing:-0.265px;">tasks</div>
<div id="s3" class="t" style="left:2865.30px;top:840.20px;font-size:25.00px;font-weight:400;color:#1c2b36;letter-spacing:-0.824px;">4.76</div>
<div id="sp3" class="t" style="left:2918.27px;top:840.20px;font-size:25.00px;font-weight:400;color:#5e6a73;letter-spacing:0.000px;">%</div>
<div id="r4w" class="t" style="left:1731.70px;top:893.05px;font-size:25.00px;font-weight:400;color:#1c2b36;letter-spacing:0.743px;">waitingforworkers</div>
<div id="r4s" class="t" style="left:1948.00px;top:893.05px;font-size:25.00px;font-weight:400;color:#6b7780;letter-spacing:0.000px;">&rsaquo;</div>
<div id="r4i" class="t" style="left:1968.60px;top:893.05px;font-size:25.00px;font-weight:400;color:#1c2b36;letter-spacing:-0.430px;">172.30.0.4</div>
<div id="c4" class="t" style="left:2700.09px;top:893.05px;font-size:25.00px;font-weight:400;color:#1c2b36;letter-spacing:0.000px;">2</div>
<div id="ct4" class="t" style="left:2725.00px;top:893.05px;font-size:25.00px;font-weight:400;color:#5e6a73;letter-spacing:-0.265px;">tasks</div>
<div id="s4" class="t" style="left:2865.30px;top:893.05px;font-size:25.00px;font-weight:400;color:#1c2b36;letter-spacing:-0.824px;">4.76</div>
<div id="sp4" class="t" style="left:2918.27px;top:893.05px;font-size:25.00px;font-weight:400;color:#5e6a73;letter-spacing:0.000px;">%</div>
<div id="r5w" class="t" style="left:1731.70px;top:945.90px;font-size:25.00px;font-weight:400;color:#1c2b36;letter-spacing:0.743px;">waitingforworkers</div>
<div id="r5s" class="t" style="left:1948.00px;top:945.90px;font-size:25.00px;font-weight:400;color:#6b7780;letter-spacing:0.000px;">&rsaquo;</div>
<div id="r5i" class="t" style="left:1968.60px;top:945.90px;font-size:25.00px;font-weight:400;color:#1c2b36;letter-spacing:-0.430px;">172.30.0.3</div>
<div id="c5" class="t" style="left:2700.09px;top:945.90px;font-size:25.00px;font-weight:400;color:#1c2b36;letter-spacing:0.000px;">2</div>
<div id="ct5" class="t" style="left:2725.00px;top:945.90px;font-size:25.00px;font-weight:400;color:#5e6a73;letter-spacing:-0.265px;">tasks</div>
<div id="s5" class="t" style="left:2865.30px;top:945.90px;font-size:25.00px;font-weight:400;color:#1c2b36;letter-spacing:-0.824px;">4.76</div>
<div id="sp5" class="t" style="left:2918.27px;top:945.90px;font-size:25.00px;font-weight:400;color:#5e6a73;letter-spacing:0.000px;">%</div>
<div id="r6w" class="t" style="left:1731.70px;top:998.75px;font-size:25.00px;font-weight:400;color:#1c2b36;letter-spacing:0.743px;">waitingforworkers</div>
<div id="r6s" class="t" style="left:1948.00px;top:998.75px;font-size:25.00px;font-weight:400;color:#6b7780;letter-spacing:0.000px;">&rsaquo;</div>
<div id="r6i" class="t" style="left:1968.60px;top:998.75px;font-size:25.00px;font-weight:400;color:#1c2b36;letter-spacing:-0.430px;">172.29.0.3</div>
<div id="c6" class="t" style="left:2700.09px;top:998.75px;font-size:25.00px;font-weight:400;color:#1c2b36;letter-spacing:0.000px;">2</div>
<div id="ct6" class="t" style="left:2725.00px;top:998.75px;font-size:25.00px;font-weight:400;color:#5e6a73;letter-spacing:-0.265px;">tasks</div>
<div id="s6" class="t" style="left:2865.30px;top:998.75px;font-size:25.00px;font-weight:400;color:#1c2b36;letter-spacing:-0.824px;">4.76</div>
<div id="sp6" class="t" style="left:2918.27px;top:998.75px;font-size:25.00px;font-weight:400;color:#5e6a73;letter-spacing:0.000px;">%</div>
<div id="r7w" class="t" style="left:1731.70px;top:1051.60px;font-size:25.00px;font-weight:400;color:#1c2b36;letter-spacing:0.743px;">waitingforworkers</div>
<div id="r7s" class="t" style="left:1948.00px;top:1051.60px;font-size:25.00px;font-weight:400;color:#6b7780;letter-spacing:0.000px;">&rsaquo;</div>
<div id="r7i" class="t" style="left:1968.60px;top:1051.60px;font-size:25.00px;font-weight:400;color:#1c2b36;letter-spacing:-0.430px;">172.24.0.5</div>
<div id="c7" class="t" style="left:2700.09px;top:1051.60px;font-size:25.00px;font-weight:400;color:#1c2b36;letter-spacing:0.000px;">2</div>
<div id="ct7" class="t" style="left:2725.00px;top:1051.60px;font-size:25.00px;font-weight:400;color:#5e6a73;letter-spacing:-0.265px;">tasks</div>
<div id="s7" class="t" style="left:2865.30px;top:1051.60px;font-size:25.00px;font-weight:400;color:#1c2b36;letter-spacing:-0.824px;">4.76</div>
<div id="sp7" class="t" style="left:2918.27px;top:1051.60px;font-size:25.00px;font-weight:400;color:#5e6a73;letter-spacing:0.000px;">%</div>
<div id="r8w" class="t" style="left:1731.70px;top:1104.45px;font-size:25.00px;font-weight:400;color:#1c2b36;letter-spacing:0.743px;">waitingforworkers</div>
<div id="r8s" class="t" style="left:1948.00px;top:1104.45px;font-size:25.00px;font-weight:400;color:#6b7780;letter-spacing:0.000px;">&rsaquo;</div>
<div id="r8i" class="t" style="left:1968.60px;top:1104.45px;font-size:25.00px;font-weight:400;color:#1c2b36;letter-spacing:-0.430px;">172.30.0.5</div>
<div id="c8" class="t" style="left:2700.09px;top:1104.45px;font-size:25.00px;font-weight:400;color:#1c2b36;letter-spacing:0.000px;">2</div>
<div id="ct8" class="t" style="left:2725.00px;top:1104.45px;font-size:25.00px;font-weight:400;color:#5e6a73;letter-spacing:-0.265px;">tasks</div>
<div id="s8" class="t" style="left:2865.30px;top:1104.45px;font-size:25.00px;font-weight:400;color:#1c2b36;letter-spacing:-0.824px;">4.76</div>
<div id="sp8" class="t" style="left:2918.27px;top:1104.45px;font-size:25.00px;font-weight:400;color:#5e6a73;letter-spacing:0.000px;">%</div>
<div id="r9w" class="t" style="left:1731.70px;top:1157.30px;font-size:25.00px;font-weight:400;color:#1c2b36;letter-spacing:0.743px;">waitingforworkers</div>
<div id="r9s" class="t" style="left:1948.00px;top:1157.30px;font-size:25.00px;font-weight:400;color:#6b7780;letter-spacing:0.000px;">&rsaquo;</div>
<div id="r9i" class="t" style="left:1968.60px;top:1157.30px;font-size:25.00px;font-weight:400;color:#1c2b36;letter-spacing:-0.430px;">172.20.0.3</div>
<div id="c9" class="t" style="left:2700.09px;top:1157.30px;font-size:25.00px;font-weight:400;color:#1c2b36;letter-spacing:0.000px;">2</div>
<div id="ct9" class="t" style="left:2725.00px;top:1157.30px;font-size:25.00px;font-weight:400;color:#5e6a73;letter-spacing:-0.265px;">tasks</div>
<div id="s9" class="t" style="left:2865.30px;top:1157.30px;font-size:25.00px;font-weight:400;color:#1c2b36;letter-spacing:-0.824px;">4.76</div>
<div id="sp9" class="t" style="left:2918.27px;top:1157.30px;font-size:25.00px;font-weight:400;color:#5e6a73;letter-spacing:0.000px;">%</div>
<div id="r10w" class="t" style="left:1731.70px;top:1210.15px;font-size:25.00px;font-weight:400;color:#1c2b36;letter-spacing:0.743px;">waitingforworkers</div>
<div id="r10s" class="t" style="left:1948.00px;top:1210.15px;font-size:25.00px;font-weight:400;color:#6b7780;letter-spacing:0.000px;">&rsaquo;</div>
<div id="r10i" class="t" style="left:1968.60px;top:1210.15px;font-size:25.00px;font-weight:400;color:#1c2b36;letter-spacing:-0.430px;">172.20.0.2</div>
<div id="c10" class="t" style="left:2700.09px;top:1210.15px;font-size:25.00px;font-weight:400;color:#1c2b36;letter-spacing:0.000px;">2</div>
<div id="ct10" class="t" style="left:2725.00px;top:1210.15px;font-size:25.00px;font-weight:400;color:#5e6a73;letter-spacing:-0.265px;">tasks</div>
<div id="s10" class="t" style="left:2865.30px;top:1210.15px;font-size:25.00px;font-weight:400;color:#1c2b36;letter-spacing:-0.824px;">4.76</div>
<div id="sp10" class="t" style="left:2918.27px;top:1210.15px;font-size:25.00px;font-weight:400;color:#5e6a73;letter-spacing:0.000px;">%</div>
<div id="r11w" class="t" style="left:1730.50px;top:1263.00px;font-size:25.00px;font-weight:400;color:#1c2b36;letter-spacing:0.609px;">waitingforremoteresources</div>
<div id="r11s" class="t" style="left:2050.50px;top:1263.00px;font-size:25.00px;font-weight:400;color:#6b7780;letter-spacing:0.000px;">&rsaquo;</div>
<div id="r11i" class="t" style="left:2070.50px;top:1263.00px;font-size:25.00px;font-weight:400;color:#1c2b36;letter-spacing:-0.408px;">172.30.0.2</div>
<div id="c11" class="t" style="left:2700.09px;top:1263.00px;font-size:25.00px;font-weight:400;color:#1c2b36;letter-spacing:0.000px;">1</div>
<div id="ct11" class="t" style="left:2725.00px;top:1263.00px;font-size:25.00px;font-weight:400;color:#5e6a73;letter-spacing:-0.265px;">tasks</div>
<div id="s11" class="t" style="left:2865.30px;top:1263.00px;font-size:25.00px;font-weight:400;color:#1c2b36;letter-spacing:-0.824px;">2.38</div>
<div id="sp11" class="t" style="left:2918.27px;top:1263.00px;font-size:25.00px;font-weight:400;color:#5e6a73;letter-spacing:0.000px;">%</div>
<div id="r12w" class="t" style="left:1730.50px;top:1315.85px;font-size:25.00px;font-weight:400;color:#1c2b36;letter-spacing:0.609px;">waitingforremoteresources</div>
<div id="r12s" class="t" style="left:2050.50px;top:1315.85px;font-size:25.00px;font-weight:400;color:#6b7780;letter-spacing:0.000px;">&rsaquo;</div>
<div id="r12i" class="t" style="left:2070.50px;top:1315.85px;font-size:25.00px;font-weight:400;color:#1c2b36;letter-spacing:-0.408px;">172.25.0.2</div>
<div id="c12" class="t" style="left:2700.09px;top:1315.85px;font-size:25.00px;font-weight:400;color:#1c2b36;letter-spacing:0.000px;">1</div>
<div id="ct12" class="t" style="left:2725.00px;top:1315.85px;font-size:25.00px;font-weight:400;color:#5e6a73;letter-spacing:-0.265px;">tasks</div>
<div id="s12" class="t" style="left:2865.30px;top:1315.85px;font-size:25.00px;font-weight:400;color:#1c2b36;letter-spacing:-0.824px;">2.38</div>
<div id="sp12" class="t" style="left:2918.27px;top:1315.85px;font-size:25.00px;font-weight:400;color:#5e6a73;letter-spacing:0.000px;">%</div>
<div id="r13w" class="t" style="left:1730.50px;top:1368.70px;font-size:25.00px;font-weight:400;color:#1c2b36;letter-spacing:0.609px;">waitingforremoteresources</div>
<div id="r13s" class="t" style="left:2050.50px;top:1368.70px;font-size:25.00px;font-weight:400;color:#6b7780;letter-spacing:0.000px;">&rsaquo;</div>
<div id="r13i" class="t" style="left:2070.50px;top:1368.70px;font-size:25.00px;font-weight:400;color:#1c2b36;letter-spacing:-0.408px;">172.18.0.2</div>
<div id="c13" class="t" style="left:2700.09px;top:1368.70px;font-size:25.00px;font-weight:400;color:#1c2b36;letter-spacing:0.000px;">1</div>
<div id="ct13" class="t" style="left:2725.00px;top:1368.70px;font-size:25.00px;font-weight:400;color:#5e6a73;letter-spacing:-0.265px;">tasks</div>
<div id="s13" class="t" style="left:2865.30px;top:1368.70px;font-size:25.00px;font-weight:400;color:#1c2b36;letter-spacing:-0.824px;">2.38</div>
<div id="sp13" class="t" style="left:2918.27px;top:1368.70px;font-size:25.00px;font-weight:400;color:#5e6a73;letter-spacing:0.000px;">%</div>
<div id="r14w" class="t" style="left:1730.50px;top:1421.55px;font-size:25.00px;font-weight:400;color:#1c2b36;letter-spacing:0.609px;">waitingforremoteresources</div>
<div id="r14s" class="t" style="left:2050.50px;top:1421.55px;font-size:25.00px;font-weight:400;color:#6b7780;letter-spacing:0.000px;">&rsaquo;</div>
<div id="r14i" class="t" style="left:2070.50px;top:1421.55px;font-size:25.00px;font-weight:400;color:#1c2b36;letter-spacing:-0.408px;">172.20.0.2</div>
<div id="c14" class="t" style="left:2700.09px;top:1421.55px;font-size:25.00px;font-weight:400;color:#1c2b36;letter-spacing:0.000px;">1</div>
<div id="ct14" class="t" style="left:2725.00px;top:1421.55px;font-size:25.00px;font-weight:400;color:#5e6a73;letter-spacing:-0.265px;">tasks</div>
<div id="s14" class="t" style="left:2865.30px;top:1421.55px;font-size:25.00px;font-weight:400;color:#1c2b36;letter-spacing:-0.824px;">2.38</div>
<div id="sp14" class="t" style="left:2918.27px;top:1421.55px;font-size:25.00px;font-weight:400;color:#5e6a73;letter-spacing:0.000px;">%</div>
<div id="r15w" class="t" style="left:1731.70px;top:1474.40px;font-size:25.00px;font-weight:400;color:#1c2b36;letter-spacing:0.743px;">waitingforworkers</div>
<div id="r15s" class="t" style="left:1948.00px;top:1474.40px;font-size:25.00px;font-weight:400;color:#6b7780;letter-spacing:0.000px;">&rsaquo;</div>
<div id="r15i" class="t" style="left:1968.60px;top:1474.40px;font-size:25.00px;font-weight:400;color:#1c2b36;letter-spacing:-0.430px;">172.25.0.5</div>
<div id="c15" class="t" style="left:2700.09px;top:1474.40px;font-size:25.00px;font-weight:400;color:#1c2b36;letter-spacing:0.000px;">1</div>
<div id="ct15" class="t" style="left:2725.00px;top:1474.40px;font-size:25.00px;font-weight:400;color:#5e6a73;letter-spacing:-0.265px;">tasks</div>
<div id="s15" class="t" style="left:2865.30px;top:1474.40px;font-size:25.00px;font-weight:400;color:#1c2b36;letter-spacing:-0.824px;">2.38</div>
<div id="sp15" class="t" style="left:2918.27px;top:1474.40px;font-size:25.00px;font-weight:400;color:#5e6a73;letter-spacing:0.000px;">%</div>
<div id="rlw" class="t" style="left:1730.50px;top:1672.15px;font-size:25.00px;font-weight:400;color:#1c2b36;letter-spacing:0.747px;">ratelimited</div>
<div id="rls" class="t" style="left:1864.00px;top:1672.15px;font-size:25.00px;font-weight:400;color:#6b7780;letter-spacing:0.000px;">&rsaquo;</div>
<div id="rli" class="t" style="left:1884.00px;top:1672.15px;font-size:25.00px;font-weight:400;color:#1c2b36;letter-spacing:-0.386px;">172.30.0.5</div>
<div id="rlc" class="t" style="left:2700.09px;top:1672.15px;font-size:25.00px;font-weight:400;color:#1c2b36;letter-spacing:0.000px;">2</div>
<div id="rlct" class="t" style="left:2725.00px;top:1672.15px;font-size:25.00px;font-weight:400;color:#5e6a73;letter-spacing:-0.265px;">tasks</div>
<div id="L1b" class="t halo" style="left:214.60px;top:810.40px;font-size:30.00px;font-weight:700;color:#1c2b36;letter-spacing:-0.546px;">3 tasks &bull; 7.1 %</div>
<div id="L1tw" class="t halo" style="left:214.60px;top:757.82px;font-size:29.50px;font-weight:400;color:#1c2b36;letter-spacing:0.967px;">waitingforworkers</div>
<div id="L1ts" class="t halo" style="left:467.10px;top:757.82px;font-size:29.50px;font-weight:400;color:#6b7780;letter-spacing:0.000px;">&rsaquo;</div>
<div id="L1ti" class="t halo" style="left:485.60px;top:757.82px;font-size:29.50px;font-weight:400;color:#1c2b36;letter-spacing:-0.449px;">172.18.0.2</div>
<div id="L2b" class="t halo" style="left:207.00px;top:955.50px;font-size:30.00px;font-weight:700;color:#1c2b36;letter-spacing:-0.546px;">3 tasks &bull; 7.1 %</div>
<div id="L2tw" class="t halo" style="left:207.00px;top:902.82px;font-size:29.50px;font-weight:400;color:#1c2b36;letter-spacing:0.967px;">waitingforworkers</div>
<div id="L2ts" class="t halo" style="left:459.50px;top:902.82px;font-size:29.50px;font-weight:400;color:#6b7780;letter-spacing:0.000px;">&rsaquo;</div>
<div id="L2ti" class="t halo" style="left:478.00px;top:902.82px;font-size:29.50px;font-weight:400;color:#1c2b36;letter-spacing:-0.449px;">172.25.0.2</div>
<div id="L3b" class="t halo" style="left:207.00px;top:1073.80px;font-size:30.00px;font-weight:700;color:#1c2b36;letter-spacing:-0.546px;">3 tasks &bull; 7.1 %</div>
<div id="L3tw" class="t halo" style="left:207.00px;top:1125.62px;font-size:29.50px;font-weight:400;color:#1c2b36;letter-spacing:0.967px;">waitingforworkers</div>
<div id="L3ts" class="t halo" style="left:459.50px;top:1125.62px;font-size:29.50px;font-weight:400;color:#6b7780;letter-spacing:0.000px;">&rsaquo;</div>
<div id="L3ti" class="t halo" style="left:478.00px;top:1125.62px;font-size:29.50px;font-weight:400;color:#1c2b36;letter-spacing:-0.449px;">172.30.0.2</div>
<div id="L4b" class="t halo" style="left:207.00px;top:1206.20px;font-size:30.00px;font-weight:700;color:#1c2b36;letter-spacing:-0.546px;">2 tasks &bull; 4.8 %</div>
<div id="L4tw" class="t halo" style="left:207.00px;top:1259.42px;font-size:29.50px;font-weight:400;color:#1c2b36;letter-spacing:0.967px;">waitingforworkers</div>
<div id="L4ts" class="t halo" style="left:459.50px;top:1259.42px;font-size:29.50px;font-weight:400;color:#6b7780;letter-spacing:0.000px;">&rsaquo;</div>
<div id="L4ti" class="t halo" style="left:478.00px;top:1259.42px;font-size:29.50px;font-weight:400;color:#1c2b36;letter-spacing:-0.449px;">172.20.0.2</div>
<div id="L5b" class="t halo" style="left:330.70px;top:1352.40px;font-size:30.00px;font-weight:700;color:#1c2b36;letter-spacing:-0.546px;">2 tasks &bull; 4.8 %</div>
<div id="L5tw" class="t halo" style="left:330.70px;top:1405.92px;font-size:29.50px;font-weight:400;color:#1c2b36;letter-spacing:0.967px;">waitingforworkers</div>
<div id="L5ts" class="t halo" style="left:583.20px;top:1405.92px;font-size:29.50px;font-weight:400;color:#6b7780;letter-spacing:0.000px;">&rsaquo;</div>
<div id="L5ti" class="t halo" style="left:601.70px;top:1405.92px;font-size:29.50px;font-weight:400;color:#1c2b36;letter-spacing:-0.449px;">172.30.0.5</div>
<div id="L6b" class="t halo" style="left:1369.00px;top:1040.30px;font-size:30.00px;font-weight:700;color:#1c2b36;letter-spacing:-0.546px;">2 tasks &bull; 4.8 %</div>
<div id="L6tw" class="t halo" style="left:1160.60px;top:987.72px;font-size:29.50px;font-weight:400;color:#1c2b36;letter-spacing:0.967px;">waitingforworkers</div>
<div id="L6ts" class="t halo" style="left:1413.10px;top:987.72px;font-size:29.50px;font-weight:400;color:#6b7780;letter-spacing:0.000px;">&rsaquo;</div>
<div id="L6ti" class="t halo" style="left:1431.60px;top:987.72px;font-size:29.50px;font-weight:400;color:#1c2b36;letter-spacing:-0.449px;">172.29.0.4</div>
<div id="pie3" class="t" style="left:869.34px;top:1009.90px;font-size:66.00px;font-weight:700;color:#1c2b36;letter-spacing:0.000px;">3</div>
<div id="pietasks" class="t" style="left:848.02px;top:1082.10px;font-size:34.00px;font-weight:400;color:#1c2b36;letter-spacing:0.000px;">tasks</div>
</div>
<div class="a" style="left:1603px;top:675px;width:1353px;height:44px;overflow:hidden"><div class="a" style="left:50px;top:-30px;width:1400px;height:30px;background:#fff;box-shadow:0 3px 16px rgba(0,0,0,.20)"></div></div>
<div class="a" style="left:1603px;top:1460px;width:1353px;height:44px;overflow:hidden"><div class="a" style="left:50px;top:44px;width:1400px;height:30px;background:#fff;box-shadow:0 -4px 16px rgba(0,0,0,.30)"></div></div>
</div></body></html>
